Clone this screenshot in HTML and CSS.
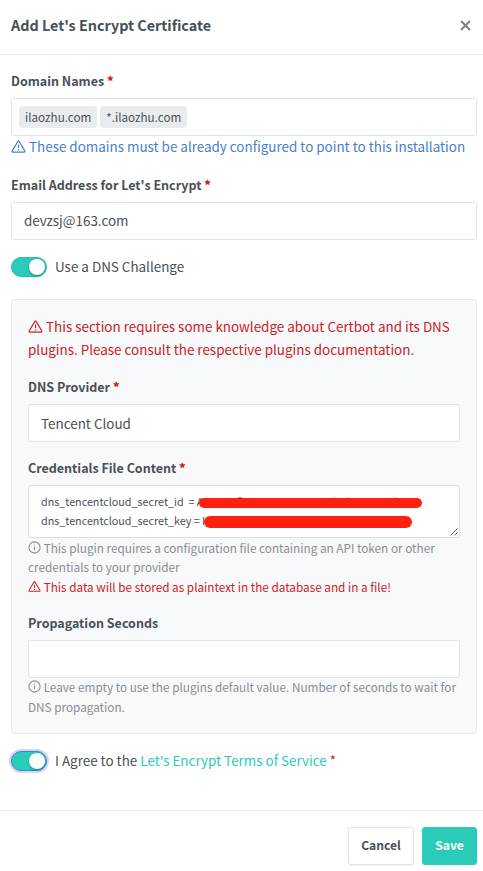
FILE: index.html
```
<!DOCTYPE html>
<html lang="en">
<head>
<meta charset="utf-8">
<title>Add Let's Encrypt Certificate</title>
<link rel="stylesheet" href="styles.css">
</head>
<body>
<svg class="defs" width="0" height="0">
  <symbol id="warn" viewBox="0 0 16 16"><path d="M7.6 2.1 1.3 12.6a.8.8 0 0 0 .7 1.3h12a.8.8 0 0 0 .7-1.3L8.4 2.1a.47.47 0 0 0-.8 0Z"/><path d="M8 5.8v3.7M8 11v1.2"/></symbol>
  <symbol id="info" viewBox="0 0 16 16"><circle cx="8" cy="8" r="6.9"/><path d="M8 7.2v4M8 4.6v1.2"/></symbol>
</svg>
<header class="head"><h1 class="title">Add Let's Encrypt Certificate</h1>
  <svg class="close" viewBox="0 0 11 11"><path d="m1 1 9 9M10 1l-9 9"/></svg>
</header>
<main class="body">
  <div class="group">
    <div class="label">Domain Names <b class="req">*</b></div>
    <div class="input chips"><span class="chip">ilaozhu.com</span><span class="chip">*.ilaozhu.com</span></div>
    <div class="note blue"><svg class="icon"><use href="#warn"/></svg> These domains must be already configured to point to this installation</div>
  </div>
  <div class="group">
    <div class="label">Email Address for Let's Encrypt <b class="req">*</b></div>
    <div class="input">devzsj@163.com</div>
  </div>
  <div class="switch-row"><span class="switch"></span><span class="caption">Use a DNS Challenge</span></div>
  <section class="panel">
    <p class="note red warning"><svg class="icon"><use href="#warn"/></svg> This section requires some knowledge about Certbot and its DNS<br>plugins. Please consult the respective plugins documentation.</p>
    <div class="group">
      <div class="label">DNS Provider <b class="req">*</b></div>
      <div class="input provider">Tencent Cloud</div>
    </div>
    <div class="group">
      <div class="label">Credentials File Content <b class="req">*</b></div>
      <div class="area">
        <div class="secret"><span class="key">dns_tencentcloud_secret_id&nbsp; = A</span><i class="tips"></i><i class="bar bar-id"></i></div>
        <div class="secret"><span class="key">dns_tencentcloud_secret_key = I</span><i class="bar bar-key"></i></div>
        <svg class="grip" viewBox="0 0 8 8"><path d="M.5 7.5l7-7M4.5 7.5l3-3"/></svg>
      </div>
      <div class="small"><svg class="icon sm"><use href="#info"/></svg> This plugin requires a configuration file containing an API token or other<br>credentials to your provider</div>
      <div class="small red"><svg class="icon sm"><use href="#warn"/></svg> This data will be stored as plaintext in the database and in a file!</div>
    </div>
    <div class="group">
      <div class="label">Propagation Seconds</div>
      <div class="input"></div>
      <div class="small"><svg class="icon sm"><use href="#info"/></svg> Leave empty to use the plugins default value. Number of seconds to wait for<br>DNS propagation.</div>
    </div>
  </section>
  <div class="switch-row"><span class="switch focus"></span><span class="caption">I Agree to the <a class="link">Let's Encrypt Terms of Service</a> <span class="req">*</span></span></div>
</main>
<footer class="foot"><button class="btn">Cancel</button><button class="btn save">Save</button></footer>
</body>
</html>
```
FILE: styles.css
```
* { box-sizing: border-box; }
body {
  margin: 0;
  height: 871px;
  overflow: hidden;
  background: #fff;
  color: #495057;
  font: 13.43px/22.5px "Noto Sans CJK SC", "Open Sans", sans-serif;
  white-space: nowrap;
}
.defs { position: absolute; }
.head {
  display: flex;
  align-items: center;
  justify-content: space-between;
  height: 55px;
  padding: 0 12px 3px 11px;
  border-bottom: 1px solid #e9ecef;
}
.title { margin: 0; padding-bottom: 2px; font-size: 14.35px; line-height: 24px; font-weight: 700; }
.close { width: 11px; height: 11px; fill: none; stroke: #808080; stroke-width: 2; }
.body { height: 755px; padding: 15px 6px 0 11px; }
.group { margin-bottom: 15px; }
.label { height: 21px; margin-bottom: 7px; font-size: 12.5px; line-height: 21px; font-weight: 700; }
.req { color: #cd201f; }
.input {
  height: 38px;
  padding: 0 12px;
  border: 1px solid #dee2e9;
  border-radius: 3px;
  background: #fff;
  line-height: 34px;
}
.provider { line-height: 36px; }
.chips { display: flex; align-items: center; gap: 3px; padding: 0 7px; }
.chip { height: 22px; padding: 0 6px; border-radius: 3px; background: #e9ecef; font-size: 11.65px; line-height: 21px; }
.note { height: 23px; line-height: 21px; }
.blue { color: #467fcf; }
.icon { width: 15px; height: 15px; vertical-align: -1.5px; fill: none; stroke: currentColor; stroke-width: 1.3; }
.icon.sm { width: 13px; height: 13px; vertical-align: -1px; }
.switch-row { display: flex; align-items: center; gap: 8px; height: 22px; margin-top: 16px; }
.caption { padding-bottom: 2px; }
.switch {
  display: flex;
  justify-content: flex-end;
  width: 36px;
  height: 20px;
  padding: 1px;
  border: 1px solid #26bfae;
  border-radius: 10px;
  background: #2bcbba;
}
.switch::after { content: ""; width: 16px; height: 16px; border-radius: 50%; background: #fff; box-shadow: 0 1px 2px rgba(0, 0, 0, .35); }
.switch.focus { border-color: #467fcf; box-shadow: 0 0 0 2px #cbdaf1; }
.panel {
  height: 435px;
  margin: 21px 0 16px;
  padding: 15px 16px;
  border: 1px solid #e9ecef;
  border-radius: 3px;
  background: #f8f9fb;
}
.warning { height: 46px; margin: 0 0 15px; line-height: 23px; }
.red, .small.red { color: #cd201f; }
.area {
  position: relative;
  height: 53px;
  padding: 6px 12px;
  border: 1px solid #d8dde8;
  border-radius: 3px;
  background: #fff;
  font-size: 10.75px;
  line-height: 19px;
}
.secret { position: relative; height: 19px; }
.bar { position: absolute; background: #ff2010; border-radius: 6px; }
.bar-id { left: 158px; top: 6px; width: 223px; height: 10px; }
.bar-key { left: 163px; top: 5px; width: 208px; height: 12px; }
.tips {
  position: absolute;
  left: 197px;
  top: 5px;
  width: 4px;
  height: 1px;
  background: #888e94;
  box-shadow: 94px 0 #d8dadc, 108px 0 #d8dadc, 155px 0 #d8dadc;
}
.grip { position: absolute; right: 1px; bottom: 1px; width: 8px; height: 8px; stroke: #555; stroke-width: .9; }
.small { position: relative; top: -.5px; color: #868e96; font-size: 11.75px; line-height: 19.5px; }
.link { color: #2bcbba; }
.foot {
  display: flex;
  justify-content: flex-end;
  gap: 8px;
  height: 61px;
  padding: 16px 6px 0;
  border-top: 1px solid #e9ecef;
}
.btn {
  width: 66px;
  height: 38px;
  padding: 0 0 2px;
  border: 1px solid #dee2e9;
  border-radius: 3px;
  background: #fff;
  box-shadow: 0 1px 1px rgba(0, 0, 0, .05);
  color: #495057;
  font: 700 12.1px/34px "Noto Sans CJK SC", "Open Sans", sans-serif;
}
.save { width: 55px; border-color: #2bcbba; background: #2bcbba; color: #fff; }
```
